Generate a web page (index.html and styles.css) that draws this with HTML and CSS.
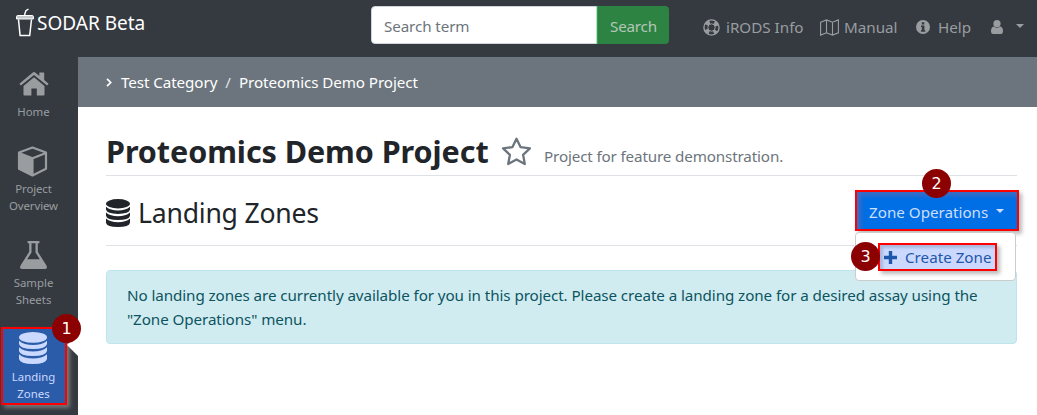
FILE: index.html
```html
<!DOCTYPE html>
<html lang="en">
<head>
<meta charset="utf-8">
<title>SODAR Beta</title>
<link rel="stylesheet" href="styles.css">
</head>
<body>
<svg class="defs" width="0" height="0">
  <symbol id="database" viewBox="0 0 28 32" preserveAspectRatio="none">
    <ellipse cx="14" cy="5.4" rx="14" ry="5.4"/>
    <path d="M0 8.800q5 4.300 14 4.300T28 8.800v3.200q-1 5-14 5t-14-5zM0 15.300q5 4.300 14 4.300t14-4.300v3.700q-1 5-14 5T0 19zM0 22.300q5 4.300 14 4.300t14-4.300V27q-1 5-14 5T0 27z"/>
  </symbol>
</svg>
<header class="topbar">
  <a class="brand"><svg class="cup" viewBox="0 0 20 30"><path d="M3.500 11.500l1.600 16h9.600l1.800-16" fill="none" stroke="#fff" stroke-width="1.500"/><path d="M1.500 11V8.700q0-1.200 1.200-1.200h14.500q1.200 0 1.200 1.200V11z" fill="#c5c8ca" stroke="#fff"/><path d="M9.500 7l1.400-4.300L13.500 1" fill="none" stroke="#fff" stroke-width="1.400"/></svg><span>SODAR Beta</span></a>
  <div class="search"><span class="field">Search term</span><span class="submit">Search</span></div>
  <nav class="links">
    <a class="irods"><svg width="17" height="17" viewBox="0 0 17 17"><circle cx="8.500" cy="8.500" r="7.600" fill="none" stroke="currentColor" stroke-width="1.400"/><circle cx="8.500" cy="8.500" r="5.700" fill="none" stroke="currentColor" stroke-width="4" stroke-dasharray="4.480 4.480" stroke-dashoffset="2.240" transform="rotate(45 8.500 8.500)"/><circle cx="8.500" cy="8.500" r="3.700" fill="none" stroke="currentColor"/></svg><span>iRODS Info</span></a>
    <a class="manual"><svg width="19" height="17" viewBox="0 0 19 17"><path d="M.6 3.200L6.500.9l6 2.300L18.400.9v12.900l-5.900 2.300-6-2.300-5.900 2.300zM6.500.9v12.900M12.500 3.200v12.900" fill="none" stroke="currentColor" stroke-width="1.100"/></svg><span>Manual</span></a>
    <a class="help"><svg width="14" height="14" viewBox="0 0 14 14"><circle cx="7" cy="7" r="7" fill="currentColor"/><path d="M5.800 2.300h2.500v2.100H5.800zM5 5.400h3.400v4.800h.9v1.500H4.900v-1.500h.9V6.900H5z" fill="#343a40"/></svg><span>Help</span></a>
    <a class="user"><svg width="12" height="14" viewBox="0 0 12 14" fill="currentColor"><circle cx="6" cy="3.700" r="3.600"/><path d="M2.800 6.400Q6 9 9.200 6.400 12 6.800 12 11.500 12 14 9.800 14H2.200Q0 14 0 11.500 0 6.800 2.800 6.400z"/></svg><i class="caret"></i></a>
  </nav>
</header>
<div class="body">
  <aside class="sidebar">
    <a class="item home"><svg width="30" height="24" viewBox="0 0 30 24" fill="currentColor"><path d="M15 5.300l10.500 8.800v8.600q0 .8-.8.800h-6.900v-7h-5.400v7H5.300q-.8 0-.8-.8v-8.600z"/><path d="M13.500.7q1.500-1.200 3 0l3.800 3.200V1q0-.6.600-.6h3.700q.6 0 .6.600v7.100l4.400 3.700-1.500 1.800L15 2.900 1.900 13.600.4 11.800z"/></svg><span>Home</span></a>
    <a class="item overview"><svg width="31" height="31" viewBox="0 0 31 31"><path d="M15.500 1.500l13.500 5v16.200l-13.500 6.800L2 22.700V6.500z" fill="none" stroke="currentColor" stroke-width="2.200" stroke-linejoin="round"/><path d="M1 7l14.500 5.300v17.900L1 23z" fill="currentColor"/><path d="M2 7l13.500 5.300L29 7M15.500 12v17.500" fill="none" stroke="currentColor" stroke-width="2.200"/></svg><span>Project<br>Overview</span></a>
    <a class="item sheets"><svg width="27" height="28" viewBox="0 0 27 28"><path d="M7.600 0h11.800v2.300h-1.600v8.500l8.500 13.500q2 3.700-1.900 3.700H2.600Q-1.300 28 .7 24.300l8.500-13.500V2.300H7.600zM11.500 2.300v9.200L7.200 18.200h12.600l-4.300-6.700V2.300z" fill="currentColor" fill-rule="evenodd"/></svg><span>Sample<br>Sheets</span></a>
    <a class="item zones"><svg width="28" height="32" fill="currentColor"><use href="#database"/></svg><span>Landing<br>Zones</span><b class="badge one">1</b></a>
    <i class="pointer"></i>
  </aside>
  <main>
    <nav class="crumbs"><svg width="6" height="9" viewBox="0 0 6 9"><path d="M1 .8l3.700 3.700L1 8.200" fill="none" stroke="#fff" stroke-width="1.700"/></svg><span class="cat">Test Category</span><span class="slash">/</span><span class="proj">Proteomics Demo Project</span></nav>
    <div class="content">
      <div class="title"><h1>Proteomics Demo Project</h1><svg width="31" height="30" viewBox="0 0 31 30"><path d="M15.500 2.700l4 8.400 9.400 1.300-6.800 6.400 1.700 9.200-8.300-4.500L7.200 28l1.700-9.200-6.800-6.400 9.400-1.300z" fill="none" stroke="#6c757d" stroke-width="2.300" stroke-linejoin="round"/></svg><span>Project for feature demonstration.</span></div>
      <div class="subtitle"><svg width="24" height="28" fill="#212529"><use href="#database"/></svg><h2>Landing Zones</h2>
        <div class="operations"><button><span>Zone Operations</span><i class="caret"></i></button><b class="badge two">2</b>
          <div class="menu"><a><svg width="13" height="13" viewBox="0 0 13 13"><path d="M6.500 0v13M0 6.500h13" stroke="#1d56aa" stroke-width="3.400"/></svg><span>Create Zone</span><b class="badge three">3</b></a></div>
        </div>
      </div>
      <div class="alert"><span class="line1">No landing zones are currently available for you in this project. Please create a landing zone for a desired assay using the</span><br><span class="line2">"Zone Operations" menu.</span></div>
    </div>
  </main>
</div>
</body>
</html>
```
FILE: styles.css
```css
* { box-sizing: border-box; }
body { margin: 0; width: 1037px; height: 415px; overflow: hidden; background: #fff; color: #212529; font: 15.200px/24px "Noto Sans", "Open Sans", sans-serif; white-space: nowrap; }
svg { display: block; flex: none; }
.defs { position: absolute; }
h1, h2 { margin: 0; }
.topbar { display: flex; height: 57px; background: #343a40; }
.brand { display: flex; width: 371px; padding: 8px 0 0 15px; color: #fff; font-size: 19px; line-height: 31px; }
.cup { width: 20px; height: 30px; margin-right: 2px; }
.search { display: flex; width: 298px; height: 38px; margin-top: 6px; line-height: 36px; }
.field { width: 226px; padding: 1px 0 0 12px; background: #fff; border: 1px solid #ced4da; border-radius: 4px 0 0 4px; color: #6c757d; letter-spacing: -.1px; }
.submit { width: 72px; padding: 2px 0 0 12px; background: #2c8342; border-left: 1px solid #28a745; border-radius: 0 4px 4px 0; color: #b5c6b8; letter-spacing: -.2px; }
.links { display: flex; margin-left: 34px; padding-top: 15px; color: #9a9da0; }
.links a { display: flex; align-items: center; height: 24px; }
.irods { width: 117px; }
.irods svg { margin-right: 6px; }
.manual { width: 96px; }
.manual svg { margin-right: 5px; }
.help { width: 75px; }
.help svg { margin-right: 8px; }
.caret { display: block; border: 4px solid transparent; border-top-color: currentColor; border-bottom: 0; }
.user .caret { margin: -2px 0 0 13px; }
.body { display: flex; height: 358px; }
.sidebar { position: relative; width: 78px; background: #343a40; color: #9a9da0; font-size: 11.400px; line-height: 17px; text-align: center; }
.item { display: flex; flex-direction: column; align-items: center; width: 67px; }
.home { height: 89px; padding-top: 15px; }
.home span { margin-top: 7px; }
.overview { height: 94px; }
.overview svg { margin-left: -2px; }
.overview span { margin-top: 3px; letter-spacing: -.1px; }
.sheets { height: 87px; padding-top: 1px; }
.sheets span { margin-top: 5px; }
.zones { position: relative; width: 66px; height: 78px; margin-left: 1px; padding: 3px 1px 0 0; background: #2a5caa; border: 2px solid #f00; box-shadow: 3px 3px 4px #777; color: #ccd9ff; }
.zones svg { margin-left: -1px; }
.zones span { margin-top: 4px; }
.pointer { position: absolute; right: 0; top: 277px; border: 11px solid transparent; border-left: 0; border-right-color: #fff; }
.badge { position: absolute; width: 29px; height: 29px; border-radius: 50%; background: #8b0000; color: #fff; font: 16px/29px "DejaVu Sans", sans-serif; letter-spacing: 0; text-align: center; z-index: 2; }
.one { left: 49px; top: -15px; }
.two { left: 67px; top: -21px; }
.three { left: -29px; top: -3px; }
main { width: 959px; }
.crumbs { display: flex; align-items: center; height: 50px; padding: 0 0 0 28px; background: #6c757d; color: #fff; letter-spacing: -.08px; }
.cat { margin-left: 9px; }
.slash { margin: 0 8px; color: #dee2e6; }
.content { padding: 0 20px 0 28px; }
.title { display: flex; height: 69px; border-bottom: 1px solid #dee2e6; }
.title h1 { width: 395px; padding-top: 24px; font-size: 30.500px; line-height: 40px; letter-spacing: -.06px; }
.title svg { margin-top: 29px; }
.title span { margin: 37px 0 0 12px; color: #6c757d; letter-spacing: -.14px; }
.subtitle { position: relative; display: flex; height: 70px; border-bottom: 1px solid #dee2e6; }
.subtitle > svg { margin-top: 23px; }
.subtitle h2 { margin-left: 8px; padding-top: 19px; font-size: 26.600px; line-height: 36px; font-weight: 400; letter-spacing: -.22px; }
.operations { position: relative; width: 164px; height: 42px; margin: 14px -2px 0 auto; }
.operations button { display: flex; align-items: center; width: 164px; height: 41px; padding: 3px 0 0 12px; background: #006ee5; border: 2px solid #f00; box-shadow: inset 4px 4px 4px #3d6cc2, 3px 3px 4px #bbb; color: #ccdfff; font: inherit; }
.operations .caret { margin: -2px 0 0 8px; }
.menu { position: absolute; left: 0; top: 42px; width: 161px; height: 49px; padding: 10px 0 0 22px; background: #fff; border: 1px solid #ccc; border-radius: 4px; }
.menu a { position: relative; display: flex; align-items: center; width: 119px; height: 28px; padding: 0 0 0 4px; background: #ccd9ff; border: 2px solid #f00; box-shadow: inset 3px 3px 3px #aab8df, 3px 3px 4px #bbb; color: #1d56aa; }
.menu a > svg { margin-right: 8px; }
.alert { height: 74px; margin-top: 24px; padding: 12px 0 0 20px; background: #d1ecf1; border: 1px solid #bee5eb; border-radius: 4px; color: #0c5460; letter-spacing: -.08px; }
```
